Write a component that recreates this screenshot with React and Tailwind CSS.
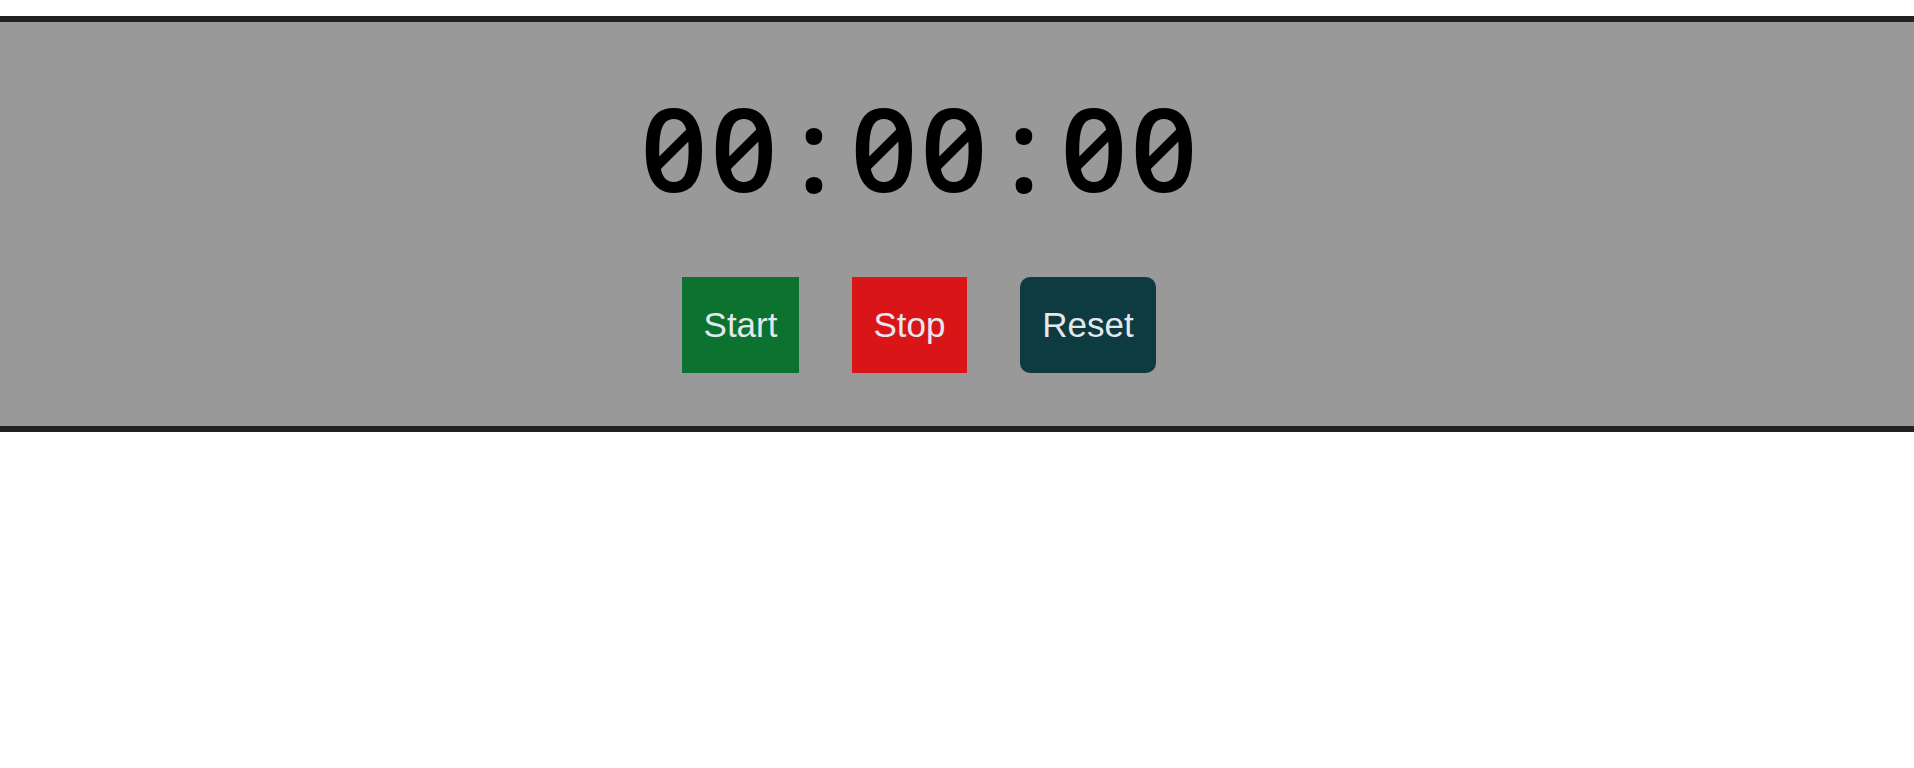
export default function App() {
  const chars = '00:00:00'.split('');
  return (
    <div className="w-full min-h-screen bg-white pt-[16px]">
      <div className="box-border h-[416px] border-y-[6px] border-[#222222] bg-[#999999] pt-[69px] pr-[76px] flex flex-col items-center">
        <div
          className="flex text-[116px] leading-[112px] font-semibold text-black whitespace-nowrap"
          style={{ fontFamily: '"Open Sans", sans-serif', fontFeatureSettings: '"zero" 1, "tnum" 1' }}
        >
          {chars.map((c, i) => (
            <span key={i} className="inline-block w-[70px] text-center">{c}</span>
          ))}
        </div>
        <div
          className="mt-[74px] flex gap-[53px] text-[35px] text-[#e4e8ee]"
          style={{ fontFamily: '"Liberation Sans", Arial, sans-serif' }}
        >
          <button className="h-[96px] w-[117px] bg-[#0b732f] flex items-center justify-center">Start</button>
          <button className="h-[96px] w-[115px] bg-[#d91518] flex items-center justify-center">Stop</button>
          <button className="h-[96px] w-[136px] rounded-[10px] bg-[#0d3b3f] flex items-center justify-center">Reset</button>
        </div>
      </div>
    </div>
  );
}
